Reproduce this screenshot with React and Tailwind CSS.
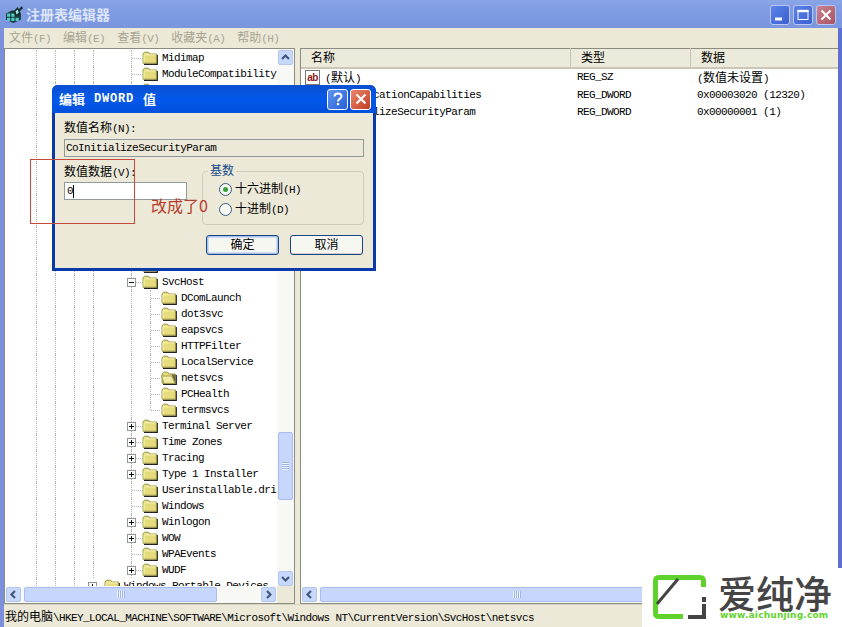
import React from "react";

const CJK = "font-['Noto_Sans_CJK_SC',sans-serif] tracking-normal text-[12px]";

// Splits a label so that Han characters get a 12px cell and Latin ones a 6px cell.
function T({ children, className = "" }) {
  const parts = String(children).split(/([\u4e00-\u9fff]+)/).filter(Boolean);
  return (
    <span className={"whitespace-pre font-['Liberation_Mono',monospace] text-[11px] tracking-[-0.59px] " + className}>
      {parts.map((p, i) =>
        /[\u4e00-\u9fff]/.test(p) ? <span key={i} className={CJK}>{p}</span> : <React.Fragment key={i}>{p}</React.Fragment>
      )}
    </span>
  );
}

function Folder({ open }) {
  return (
    <svg width="16" height="14" viewBox="0 0 16 14" className="shrink-0">
      <path d="M2 13.2H15.2V4" fill="none" stroke="#222" strokeWidth="1.4" />
      <path d="M1 12.2V3L2.5 1.2H6.5L8 3H14.4V12.2Z" fill="#e6dc7c" stroke="#918b3c" strokeWidth="0.9" />
      {open ? (
        <>
          <path d="M10.500 3.500L14.500 12.400V3.500Z" fill="#6b6745" />
          <path d="M0.5 5H10.6L14 12.4H3Z" fill="#f1eaa0" stroke="#918b3c" strokeWidth="0.8" />
        </>
      ) : (
        <path d="M2 11.5V3.8H13.6" fill="none" stroke="#faf6bd" strokeWidth="0.9" />
      )}
    </svg>
  );
}

function Box({ sign }) {
  return (
    <svg width="9" height="9" viewBox="0 0 9 9" className="shrink-0">
      <rect x="0.5" y="0.5" width="8" height="8" fill="#fbfbf7" stroke="#8c98a0" />
      <path d={sign === "+" ? "M2 4.5H7M4.5 2V7" : "M2 4.5H7"} stroke="#111" />
    </svg>
  );
}

const rows = [
  ["Midimap"], ["ModuleCompatibility"], [""], [""], [""], [""], [""], [""], [""], [""], [""], [""], [""],
  [""], ["SvcHost", "-"],
  ["DComLaunch", "c"], ["dot3svc", "c"], ["eapsvcs", "c"], ["HTTPFilter", "c"], ["LocalService", "c"],
  ["netsvcs", "c"], ["PCHealth", "c"], ["termsvcs", "e"],
  ["Terminal Server", "+"], ["Time Zones", "+"], ["Tracing", "+"], ["Type 1 Installer", "+"],
  ["Userinstallable.dri"], ["Windows"], ["Winlogon", "+"], ["WOW", "+"], ["WPAEvents"], ["WUDF", "+"],
];

const dot = "border-dotted border-[#b4b4b4]";

function Guide() {
  return <i className={"w-[19px] h-4 shrink-0 border-l " + dot} />;
}

function Row({ name, kind }) {
  const child = kind === "c" || kind === "e";
  return (
    <div className="flex h-4 items-center">
      <i className="w-[31px] shrink-0" />
      <Guide /><Guide /><Guide /><Guide />
      <i className="w-[19px] shrink-0" />
      {child ? (
        <>
          <Guide />
          <span className={"flex h-4 w-[11px] shrink-0 items-center " + (kind === "e" ? "" : "border-l " + dot)}>
            {kind === "e" && <i className={"h-2 w-px self-start border-l " + dot} />}
            <i className={"w-[9px] border-t " + dot} />
          </span>
        </>
      ) : (
        <span className={"flex h-4 w-[11px] shrink-0 items-center border-l " + dot}>
          {kind ? <span className="-ml-[5px] flex items-center"><Box sign={kind} /><i className={"w-[5px] border-t " + dot} /></span>
            : <i className={"w-[9px] border-t " + dot} />}
        </span>
      )}
      <Folder open={name === "netsvcs"} />
      <T className="ml-[4px] text-black leading-4">{name}</T>
    </div>
  );
}

function Arrow({ dir }) {
  const d = { up: "M4 9L7.5 5.5L11 9", down: "M4 6L7.5 9.5L11 6", left: "M9 4L5.5 7.5L9 11", right: "M6 4L9.5 7.5L6 11" }[dir];
  return (
    <span className="size-[15px] shrink-0 rounded-[2px] border border-[#b4c7ef] bg-[#c8d8fb]">
      <svg width="13" height="13" viewBox="1 1 13 13"><path d={d} fill="none" stroke="#40577f" strokeWidth="2.2" /></svg>
    </span>
  );
}

function WinBtn({ kind, size = "size-5", red, dim }) {
  const bg = red ? (dim ? "bg-linear-to-br from-[#c9848f] to-[#a95263]" : "bg-linear-to-br from-[#e8886c] to-[#c43a20]")
    : dim ? "bg-linear-to-br from-[#5b83e8] to-[#3c5fd0]" : "bg-linear-to-br from-[#6293ee] to-[#2460d8]";
  return (
    <span className={"flex items-center justify-center rounded-[3px] border " + (dim ? "border-[#b9c7f2] " : "border-white ") + size + " " + bg}>
      <svg width="18" height="18" viewBox="0 0 18 18" fill="none" stroke="#fff">
        {kind === "min" && <path d="M4 13H11" strokeWidth="3" />}
        {kind === "max" && <><rect x="4" y="4.5" width="10" height="9" strokeWidth="1" /><path d="M3.5 5H14.5" strokeWidth="2.4" /></>}
        {kind === "close" && <path d="M4.5 4.5L13.5 13.5M13.5 4.5L4.5 13.5" strokeWidth="2.1" />}
        {kind === "help" && <><path d="M5.5 6.5C5.5 2.5 12.5 2.5 12.5 6.3C12.5 8.8 9 8.6 9 11.5" strokeWidth="2" /><path d="M9 13V15.2" strokeWidth="2.2" /></>}
      </svg>
    </span>
  );
}

function Grip({ vertical }) {
  return <i className={vertical ? "h-[8px] w-[7px] bg-[repeating-linear-gradient(0deg,#eef4ff_0_1px,#9fb5e6_1px_2px)]" : "h-[7px] w-[8px] bg-[repeating-linear-gradient(90deg,#eef4ff_0_1px,#9fb5e6_1px_2px)]"} />;
}

function Value({ name, type, data, icon }) {
  return (
    <div className="flex h-[17.3px] items-center text-black">
      <span className="flex w-[271px] items-center">
        <span className="ml-[4px] flex h-[15px] w-[15px] items-center justify-center border border-[#777] bg-white font-['Liberation_Sans',sans-serif] text-[10px] font-bold tracking-[-0.5px] text-[#8e2020]">{icon}</span>
        <T className="ml-[5px]">{name}</T>
      </span>
      <T className="ml-[5px] w-[120px]">{type}</T>
      <T>{data}</T>
    </div>
  );
}

function Radio({ on, children }) {
  return (
    <span className="flex h-5 shrink-0 items-center gap-[3px]">
      <i className="flex size-[13px] items-center justify-center rounded-full border border-[#375f82] bg-[#f8f8f4]">{on && <i className="size-[5px] rounded-full bg-[#35a335]" />}</i>
      <T>{children}</T>
    </span>
  );
}

function Dialog() {
  return (
    <div className="absolute left-[52px] top-[85px] flex h-[186px] w-[324px] flex-col rounded-t-[6px] bg-[#0a3aa8] px-[3px] pb-[3px]">
      <div className="-mx-[3px] flex h-[28px] shrink-0 items-center rounded-t-[6px] bg-linear-to-b from-[#0a50d0] via-[#0458ea] to-[#0150dc] pl-[7px] pr-[5px]">
        <span className="flex flex-1 items-center whitespace-pre font-['Noto_Sans_CJK_SC',sans-serif] text-[13px] font-bold text-white">
          编辑<span className="mx-[9px] font-['Liberation_Mono',monospace] text-[12px] tracking-[0.8px]">DWORD</span>值
        </span>
        <span className="flex gap-[2px]"><WinBtn kind="help" size="size-[21px]" /><WinBtn kind="close" red size="size-[21px]" /></span>
      </div>
      <div className="flex flex-1 flex-col bg-[#ece9d8] px-[9px] text-black">
        <T className="mt-[6px] h-[18px] leading-[16px]">数值名称(N):</T>
        <div className="mt-[2px] flex h-[18px] w-[300px] items-center border border-[#8f9a9c] pl-px"><T>CoInitializeSecurityParam</T></div>
        <div className="flex h-[68px]">
          <div className="flex w-[138px] flex-col">
            <T className="mt-[6px] h-[17px] leading-[15px]">数值数据(V):</T>
            <div className="mt-[2px] flex h-[18px] w-[123px] items-center border border-[#8f9a9c] bg-white pl-[2px]"><T>0</T><i className="h-[13px] w-px bg-black" /></div>
          </div>
          <fieldset className="mt-[6px] flex h-[62px] w-[162px] flex-col rounded-[4px] border border-[#cfcdb9] pl-[16px]">
            <legend className="-ml-[11px] flex h-[16px] items-center px-[2px] text-[#194c8c]"><T>基数</T></legend>
            <Radio on>十六进制(H)</Radio>
            <Radio>十进制(D)</Radio>
          </fieldset>
        </div>
        <div className="mt-[10px] flex gap-[11px] pl-[142px]">
          <span className="flex h-[20px] w-[73px] items-center justify-center rounded-[3px] border border-[#174484] bg-[#f7f7f2] shadow-[inset_0_0_0_1.5px_#a9c2ec]"><T>确定</T></span>
          <span className="flex h-[20px] w-[73px] items-center justify-center rounded-[3px] border border-[#174484] bg-[#f7f7f2] shadow-[inset_0_-1px_0_#d6d0c5]"><T>取消</T></span>
        </div>
      </div>
    </div>
  );
}

export default function App() {
  return (
    <div className="relative flex h-[627px] w-[842px] flex-col overflow-hidden bg-[#ece9d8]">
      <header className="flex h-7 shrink-0 items-center bg-linear-to-b from-[#8aa5e6] via-[#7d9ae1] to-[#7b96df] pl-[6px] pr-[6px]">
        <svg width="17" height="17" viewBox="0 0 16 16">
          <path d="M0 7L6 4L14 7V13L7 16L0 13Z" fill="#173c3c" />
          <path d="M1 7H4V10H1ZM5 7H8V10H5ZM1 11H4V14H1ZM5 11H8V14H5ZM9 11H12V14H9Z" fill="#53c9c2" />
          <path d="M7 5L11 1L12 3L15 0L16 2L13 5L14 8L10 10L8 8Z" fill="#163030" /><path d="M9 5L11 3.500L12 6L10 8Z" fill="#a7efe9" />
        </svg>
        <span className="ml-[3px] flex-1 font-['Noto_Sans_CJK_SC',sans-serif] text-[14px] font-bold leading-7 text-[#dce5fa]">注册表编辑器</span>
        <span className="flex gap-[3px] pt-px"><WinBtn dim kind="min" /><WinBtn dim kind="max" /><WinBtn dim red kind="close" /></span>
      </header>
      <div className="flex min-h-0 flex-1 flex-col border-l-4 border-r-4 border-l-[#7b8fdd] border-r-[#5f6fd0]">
        <nav className="flex h-5 shrink-0 items-center gap-[12px] pl-[5px] text-[#a7a492]">
          <T>文件(F)</T><T>编辑(E)</T><T>查看(V)</T><T>收藏夹(A)</T><T>帮助(H)</T>
        </nav>
        <main className="flex h-[556px] shrink-0">
          <section className="flex w-[291px] shrink-0 flex-col border border-[#8a8c80] bg-white">
            <div className="flex h-[537px] shrink-0 overflow-hidden">
              <div className="h-[537px] w-[272px] overflow-hidden pt-px">
                {rows.map(([n, k], i) => <Row key={i} name={n} kind={k} />)}
                <div className="flex h-4 items-center">
                  <i className="w-[31px] shrink-0" /><Guide /><Guide /><Guide />
                  <span className="-ml-[5px] flex w-[16px] shrink-0 items-center"><Box sign="+" /><i className={"w-[5px] border-t " + dot} /></span>
                  <Folder /><T className="ml-[4px] text-black">Windows Portable Devices</T>
                </div>
              </div>
              <div className="flex flex-1 flex-col items-center bg-[#f8f8f4] pt-px">
                <Arrow dir="up" />
                <span className="mb-auto mt-[367px] flex h-[68px] w-[15px] shrink-0 items-center justify-center rounded-[2px] border border-[#a9bdee] bg-[#c6d6fc]"><Grip vertical /></span>
                <Arrow dir="down" />
              </div>
            </div>
            <div className="flex flex-1 items-center bg-[#f8f8f4]">
              <span className="flex pl-px"><Arrow dir="left" /></span>
              <span className="ml-[3px] mr-auto flex h-[15px] w-[193px] items-center justify-center rounded-[2px] border border-[#a9bdee] bg-[#c6d6fc]"><Grip /></span>
              <Arrow dir="right" />
              <i className="ml-px h-full w-[17px] bg-[#ece9d8]" />
            </div>
          </section>
          <section className="ml-[5px] flex flex-1 flex-col border border-r-0 border-[#8a8c80] bg-white text-black">
            <div className="flex h-5 items-center border-b-2 border-[#cbc7b8] bg-[#ebeadb]">
              <span className="flex w-[270px] border-r border-[#c7c5b2] pl-[10px]"><T>名称</T></span>
              <span className="flex w-[120px] border-r border-[#c7c5b2] pl-[10px]"><T>类型</T></span>
              <span className="flex pl-[10px]"><T>数据</T></span>
            </div>
            <div className="flex-1">
              <Value icon="ab" name="(默认)" type="REG_SZ" data="(数值未设置)" />
              <Value name="AuthenticationCapabilities" type="REG_DWORD" data="0x00003020 (12320)" />
              <Value name="CoInitializeSecurityParam" type="REG_DWORD" data="0x00000001 (1)" />
            </div>
            <div className="flex h-[17px] items-center bg-[#f8f8f4] pl-px">
              <Arrow dir="left" />
              <span className="ml-[3px] flex h-[15px] w-[394px] items-center justify-center rounded-[2px] border border-[#a9bdee] bg-[#c6d6fc]"><Grip /></span>
            </div>
          </section>
        </main>
        <footer className="flex flex-1 items-center border-t border-[#d6d3c1] pl-px pt-[2px] text-black"><T>我的电脑\HKEY_LOCAL_MACHINE\SOFTWARE\Microsoft\Windows NT\CurrentVersion\SvcHost\netsvcs</T></footer>
      </div>
      <Dialog />
      <div className="absolute left-[30px] top-[159px] h-[65px] w-[105px] border border-[#c8483c]" />
      <span className="absolute left-[151px] top-[193px] font-['Noto_Sans_CJK_SC',sans-serif] text-[16px] leading-6 text-[#b83a2c]">改成了0</span>
      <div className="absolute left-[642px] top-[568px] flex h-[59px] w-[200px] bg-white pl-[10px] pt-[6px]">
        <svg width="56" height="47" viewBox="0 0 56 47" fill="none" strokeWidth="5" className="shrink-0">
          <path d="M31 42.500H7Q3.500 42.500 3.500 39V7Q3.500 3.500 7 3.500H48Q51.500 3.500 51.500 7V13" stroke="#5fd32c" />
          <path d="M5 30L26 5" stroke="#444" strokeWidth="3" />
          <path d="M52 23V28M52 30V43H36" stroke="#444" strokeWidth="4" />
        </svg>
        <div className="ml-[10px] flex flex-col">
          <span className="font-['Noto_Sans_CJK_SC',sans-serif] text-[38px] font-medium leading-[36px] text-[#454545]">爱纯净</span>
          <span className="pl-[2px] font-['DejaVu_Sans',sans-serif] text-[9px] font-bold leading-[11px] tracking-[0.2px] text-[#5fd32c]">www.aichunjing.com</span>
        </div>
      </div>
    </div>
  );
}
